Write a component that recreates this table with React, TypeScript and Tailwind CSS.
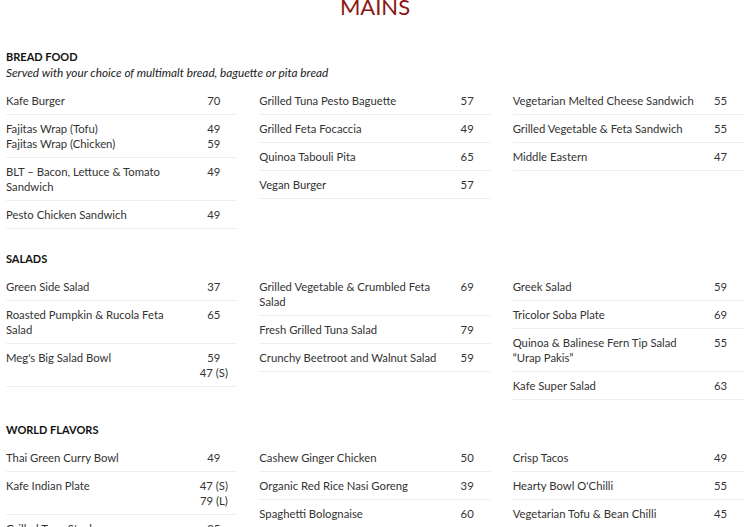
import React from "react";

type Item = { names: string[]; prices: string[] };
type Section = { title: string; subtitle?: string; columns: Item[][] };

const i = (name: string | string[], price: string | string[]): Item => ({
  names: Array.isArray(name) ? name : [name],
  prices: Array.isArray(price) ? price : [price],
});

const sections: Section[] = [
  {
    title: "Bread Food",
    subtitle: "Served with your choice of multimalt bread, baguette or pita bread",
    columns: [
      [
        i("Kafe Burger", "70"),
        i(["Fajitas Wrap (Tofu)", "Fajitas Wrap (Chicken)"], ["49", "59"]),
        i("BLT – Bacon, Lettuce & Tomato Sandwich", "49"),
        i("Pesto Chicken Sandwich", "49"),
      ],
      [
        i("Grilled Tuna Pesto Baguette", "57"),
        i("Grilled Feta Focaccia", "49"),
        i("Quinoa Tabouli Pita", "65"),
        i("Vegan Burger", "57"),
      ],
      [
        i("Vegetarian Melted Cheese Sandwich", "55"),
        i("Grilled Vegetable & Feta Sandwich", "55"),
        i("Middle Eastern", "47"),
      ],
    ],
  },
  {
    title: "Salads",
    columns: [
      [
        i("Green Side Salad", "37"),
        i("Roasted Pumpkin & Rucola Feta Salad", "65"),
        i("Meg's Big Salad Bowl", ["59", "47 (S)"]),
      ],
      [
        i("Grilled Vegetable & Crumbled Feta Salad", "69"),
        i("Fresh Grilled Tuna Salad", "79"),
        i("Crunchy Beetroot and Walnut Salad", "59"),
      ],
      [
        i("Greek Salad", "59"),
        i("Tricolor Soba Plate", "69"),
        i("Quinoa & Balinese Fern Tip Salad “Urap Pakis”", "55"),
        i("Kafe Super Salad", "63"),
      ],
    ],
  },
  {
    title: "World Flavors",
    columns: [
      [
        i("Thai Green Curry Bowl", "49"),
        i("Kafe Indian Plate", ["47 (S)", "79 (L)"]),
        i("Grilled Tuna Steak", "85"),
      ],
      [
        i("Cashew Ginger Chicken", "50"),
        i("Organic Red Rice Nasi Goreng", "39"),
        i("Spaghetti Bolognaise", "60"),
      ],
      [
        i("Crisp Tacos", "49"),
        i("Hearty Bowl O'Chilli", "55"),
        i("Vegetarian Tofu & Bean Chilli", "45"),
      ],
    ],
  },
];

const Row = ({ item }: { item: Item }) => (
  <div className="flex items-start border-b border-[#eeeeee] pt-[6px] pb-[6px] text-[11.3px] leading-[15px] text-[#333333]">
    <div className="flex-1">
      {item.names.map((n) => (
        <div key={n}>{n}</div>
      ))}
    </div>
    <div className="w-[47px] shrink-0 text-center">
      {item.prices.map((p) => (
        <div key={p}>{p}</div>
      ))}
    </div>
  </div>
);

export default function App() {
  return (
    <div className="min-h-screen bg-white px-[6px] font-['Lato',sans-serif]">
      <h1 className="-mt-[4px] text-center text-[22px] leading-[22px] font-normal text-[#8b1515]">
        MAINS
      </h1>
      <div className="mt-[31px]">
        {sections.map((s, idx) => (
          <section key={s.title} className={idx === 0 ? "" : "mt-[22px]"}>
            <h2 className="text-[11px] leading-[16px] font-bold uppercase text-[#111111]">
              {s.title}
            </h2>
            {s.subtitle && (
              <p className="text-[11.8px] leading-[16px] italic text-[#222222]">{s.subtitle}</p>
            )}
            <div className="mt-[6px] grid grid-cols-3 items-start gap-x-[22px]">
              {s.columns.map((col, c) => (
                <div key={c} className="flex flex-col">
                  {col.map((item) => (
                    <Row key={item.names[0]} item={item} />
                  ))}
                </div>
              ))}
            </div>
          </section>
        ))}
      </div>
    </div>
  );
}
